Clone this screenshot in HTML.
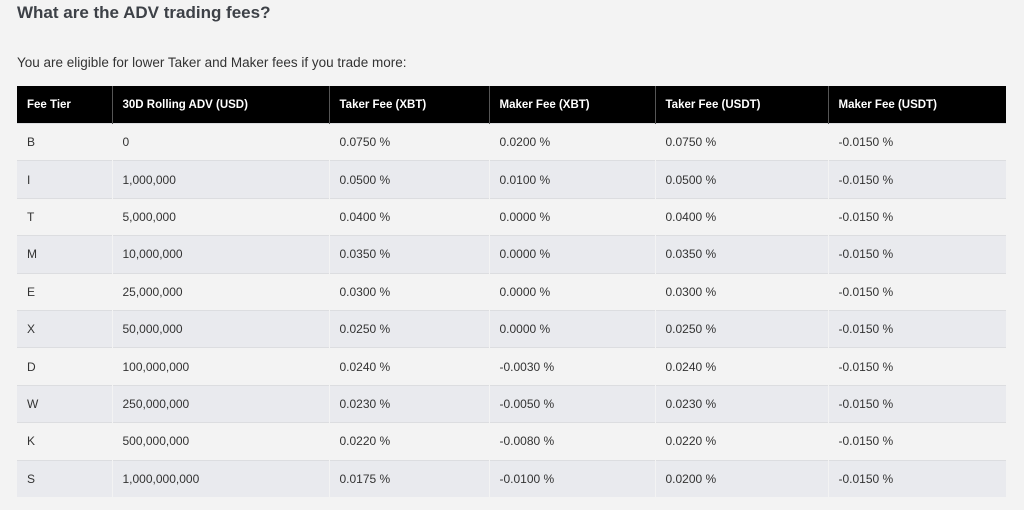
<!DOCTYPE html>
<html><head><style>
body{margin:0;background:#f3f3f3;width:1024px;height:510px;overflow:hidden;font-family:"Liberation Sans",sans-serif;color:#333;}
h2{position:absolute;left:17px;top:3px;margin:0;font-size:17px;font-weight:bold;color:#3d4147;}
p{position:absolute;left:17px;top:55px;margin:0;font-size:13.5px;color:#333;}
table{position:absolute;left:17px;top:86px;border-collapse:collapse;width:989px;font-size:12px;}
th{background:#000;color:#fff;text-align:left;font-weight:bold;height:37px;padding:0 0 0 10px;border-left:1px solid #555;font-size:11.5px;}
th:first-child{border-left:none}
td{height:36.4px;padding:0 0 0 10px;border-left:1px solid #f3f3f3;border-top:1px solid #dcdde0;color:#333;}
td:first-child{border-left:none}
tr:nth-child(even) td{background:#e9eaee;}
tr:nth-child(odd) td{background:#f3f3f3;}
col.a{width:95px}col.b{width:217px}col.c{width:160px}col.d{width:166px}col.e{width:173px}
</style></head><body>
<h2>What are the ADV trading fees?</h2>
<p>You are eligible for lower Taker and Maker fees if you trade more:</p>
<table>
<colgroup><col class="a"><col class="b"><col class="c"><col class="d"><col class="e"><col></colgroup>
<thead><tr><th>Fee Tier</th><th>30D Rolling ADV (USD)</th><th>Taker Fee (XBT)</th><th>Maker Fee (XBT)</th><th>Taker Fee (USDT)</th><th>Maker Fee (USDT)</th></tr></thead>
<tbody>
<tr><td>B</td><td>0</td><td>0.0750 %</td><td>0.0200 %</td><td>0.0750 %</td><td>-0.0150 %</td></tr>
<tr><td>I</td><td>1,000,000</td><td>0.0500 %</td><td>0.0100 %</td><td>0.0500 %</td><td>-0.0150 %</td></tr>
<tr><td>T</td><td>5,000,000</td><td>0.0400 %</td><td>0.0000 %</td><td>0.0400 %</td><td>-0.0150 %</td></tr>
<tr><td>M</td><td>10,000,000</td><td>0.0350 %</td><td>0.0000 %</td><td>0.0350 %</td><td>-0.0150 %</td></tr>
<tr><td>E</td><td>25,000,000</td><td>0.0300 %</td><td>0.0000 %</td><td>0.0300 %</td><td>-0.0150 %</td></tr>
<tr><td>X</td><td>50,000,000</td><td>0.0250 %</td><td>0.0000 %</td><td>0.0250 %</td><td>-0.0150 %</td></tr>
<tr><td>D</td><td>100,000,000</td><td>0.0240 %</td><td>-0.0030 %</td><td>0.0240 %</td><td>-0.0150 %</td></tr>
<tr><td>W</td><td>250,000,000</td><td>0.0230 %</td><td>-0.0050 %</td><td>0.0230 %</td><td>-0.0150 %</td></tr>
<tr><td>K</td><td>500,000,000</td><td>0.0220 %</td><td>-0.0080 %</td><td>0.0220 %</td><td>-0.0150 %</td></tr>
<tr><td>S</td><td>1,000,000,000</td><td>0.0175 %</td><td>-0.0100 %</td><td>0.0200 %</td><td>-0.0150 %</td></tr>
</tbody></table>
</body></html>
